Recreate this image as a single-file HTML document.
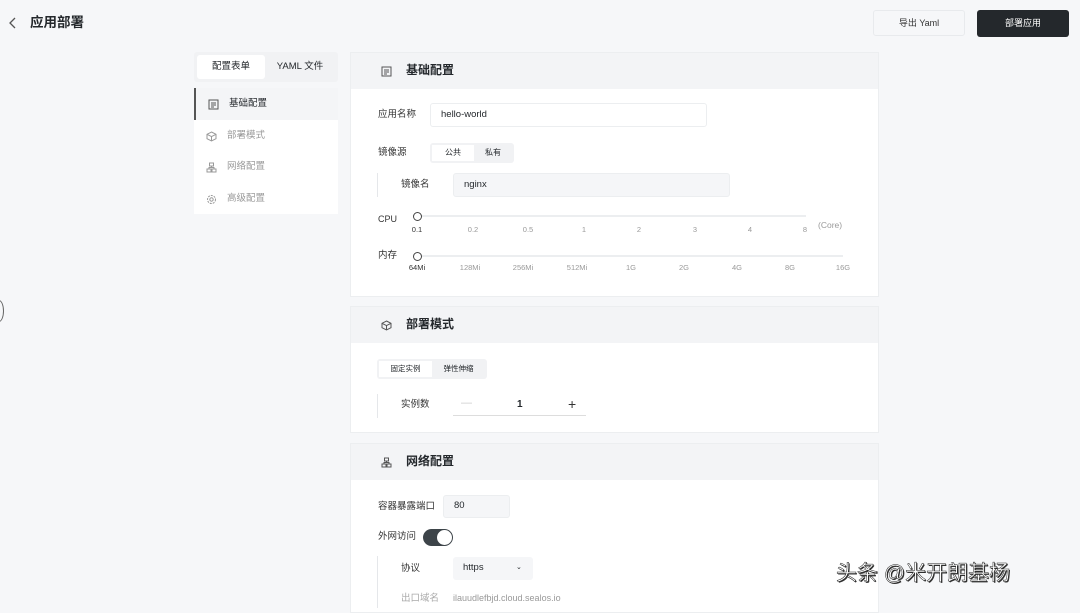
<!DOCTYPE html>
<html><head><meta charset="utf-8"><style>
*{box-sizing:border-box;margin:0;padding:0}
body{width:1080px;height:608px;overflow:hidden;background:#f6f7f9;font-family:"Liberation Sans","Noto Sans CJK SC",sans-serif;color:#24282c;position:relative;font-size:10px;line-height:1.15}
.a{position:absolute}
.card{position:absolute;left:350px;width:529px;background:#fff;border:1px solid #eceef0}
.hd{height:36px;background:#f3f4f6;display:flex;align-items:center;padding-left:30px;font-size:12px;font-weight:bold;color:#24282c}
.hd svg{margin-right:14px}
.lbl{position:absolute;font-size:9.5px;color:#333}
.inp{position:absolute;background:#f5f6f8;border:1px solid #eceef0;border-radius:3px;font-size:9.5px;padding-left:10px;display:flex;align-items:center}
.track{position:absolute;height:2px;background:#eceef0}
.knob{position:absolute;width:9px;height:9px;border:1.5px solid #444;border-radius:50%;background:#fff}
.tk{position:absolute;font-size:7.5px;color:#999;transform:translateX(-50%)}
.nav{position:absolute;left:194px;width:144px;height:32px;display:flex;align-items:center;padding-left:12px;font-size:9.5px;color:#999}
.nav svg{margin-right:10px}
</style></head><body>
<svg class="a" style="left:8px;top:17px" width="10" height="12" viewBox="0 0 10 12"><path d="M7 1L2 6l5 5" fill="none" stroke="#555" stroke-width="1.3"/></svg>
<div class="a" style="left:30px;top:15px;font-size:13.5px;font-weight:bold">应用部署</div>
<div class="a" style="left:873px;top:10px;width:92px;height:26px;border:1px solid #e8eaed;border-radius:3px;background:#f6f7f9;font-size:9px;display:flex;align-items:center;justify-content:center;color:#333">导出 Yaml</div>
<div class="a" style="left:977px;top:10px;width:92px;height:27px;border-radius:3px;background:#24282c;color:#fff;font-size:9px;display:flex;align-items:center;justify-content:center">部署应用</div>

<div class="a" style="left:194px;top:52px;width:144px;height:30px;background:#f1f2f4;border-radius:3px"></div>
<div class="a" style="left:197px;top:55px;width:68px;height:24px;background:#fff;border-radius:3px;font-size:9.5px;display:flex;align-items:center;justify-content:center">配置表单</div>
<div class="a" style="left:265px;top:55px;width:70px;height:24px;font-size:9.5px;display:flex;align-items:center;justify-content:center">YAML 文件</div>
<div class="a" style="left:194px;top:88px;width:144px;height:126px;background:#fff"></div>
<div class="nav" style="top:88px;background:#f4f5f7;border-left:2px solid #555;color:#24282c"><svg width="11" height="11" viewBox="0 0 11 11"><rect x="1" y="1" width="9" height="9" fill="none" stroke="#555"/><path d="M3 4h5M3 6h5M3 8h3" stroke="#555"/></svg>基础配置</div>
<div class="nav" style="top:120px"><svg width="11" height="11" viewBox="0 0 11 11"><path d="M5.5 1L10 3.3v4.4L5.5 10 1 7.7V3.3zM1 3.3l4.5 2.3L10 3.3M5.5 5.6V10" fill="none" stroke="#999"/></svg>部署模式</div>
<div class="nav" style="top:151px"><svg width="11" height="11" viewBox="0 0 11 11"><rect x="3.5" y="1" width="4" height="3" fill="none" stroke="#999"/><rect x="1" y="7" width="4" height="3" fill="none" stroke="#999"/><rect x="6" y="7" width="4" height="3" fill="none" stroke="#999"/><path d="M5.5 4v1.5M3 7V5.5h5V7" fill="none" stroke="#999"/></svg>网络配置</div>
<div class="nav" style="top:183px"><svg width="11" height="11" viewBox="0 0 11 11"><circle cx="5.5" cy="5.5" r="1.7" fill="none" stroke="#999"/><circle cx="5.5" cy="5.5" r="4" fill="none" stroke="#999" stroke-dasharray="2 1"/></svg>高级配置</div>

<div class="card" style="top:52px;height:245px">
<div class="hd"><svg width="11" height="11" viewBox="0 0 11 11"><rect x="1" y="1" width="9" height="9" fill="none" stroke="#555"/><path d="M3 4h5M3 6h5M3 8h3" stroke="#555"/></svg>基础配置</div>
</div>
<div class="lbl" style="left:378px;top:110px">应用名称</div>
<div class="inp" style="left:430px;top:103px;width:277px;height:24px;background:#fff">hello-world</div>
<div class="lbl" style="left:378px;top:148px">镜像源</div>
<div class="a" style="left:430px;top:143px;width:84px;height:20px;background:#f1f2f4;border-radius:3px"></div>
<div class="a" style="left:432px;top:145px;width:42px;height:16px;background:#fff;font-size:8px;display:flex;align-items:center;justify-content:center">公共</div>
<div class="a" style="left:474px;top:145px;width:38px;height:16px;font-size:8px;display:flex;align-items:center;justify-content:center">私有</div>
<div class="a" style="left:377px;top:173px;width:1px;height:24px;background:#e5e7ea"></div>
<div class="lbl" style="left:401px;top:180px">镜像名</div>
<div class="inp" style="left:453px;top:173px;width:277px;height:24px">nginx</div>
<div class="lbl" style="left:378px;top:214px;font-size:9px">CPU</div>
<div class="track" style="left:417px;top:215px;width:389px"></div>
<div class="knob" style="left:413px;top:212px"></div>
<div class="tk" style="left:417px;top:226px;color:#333">0.1</div><div class="tk" style="left:473px;top:226px">0.2</div><div class="tk" style="left:528px;top:226px">0.5</div><div class="tk" style="left:584px;top:226px">1</div><div class="tk" style="left:639px;top:226px">2</div><div class="tk" style="left:695px;top:226px">3</div><div class="tk" style="left:750px;top:226px">4</div><div class="tk" style="left:805px;top:226px">8</div>
<div class="a" style="left:818px;top:221px;font-size:8.5px;color:#999">(Core)</div>
<div class="lbl" style="left:378px;top:251px">内存</div>
<div class="track" style="left:417px;top:255px;width:426px"></div>
<div class="knob" style="left:413px;top:252px"></div>
<div class="tk" style="left:417px;top:264px;color:#333">64Mi</div><div class="tk" style="left:470px;top:264px">128Mi</div><div class="tk" style="left:523px;top:264px">256Mi</div><div class="tk" style="left:577px;top:264px">512Mi</div><div class="tk" style="left:631px;top:264px">1G</div><div class="tk" style="left:684px;top:264px">2G</div><div class="tk" style="left:737px;top:264px">4G</div><div class="tk" style="left:790px;top:264px">8G</div><div class="tk" style="left:843px;top:264px">16G</div>

<div class="card" style="top:306px;height:127px">
<div class="hd"><svg width="11" height="11" viewBox="0 0 11 11"><path d="M5.5 1L10 3.3v4.4L5.5 10 1 7.7V3.3zM1 3.3l4.5 2.3L10 3.3M5.5 5.6V10" fill="none" stroke="#555"/></svg>部署模式</div>
</div>
<div class="a" style="left:377px;top:359px;width:110px;height:20px;background:#f1f2f4;border-radius:3px"></div>
<div class="a" style="left:379px;top:361px;width:53px;height:16px;background:#fff;font-size:7.5px;display:flex;align-items:center;justify-content:center">固定实例</div>
<div class="a" style="left:432px;top:361px;width:53px;height:16px;font-size:7.5px;display:flex;align-items:center;justify-content:center">弹性伸缩</div>
<div class="a" style="left:377px;top:394px;width:1px;height:24px;background:#e5e7ea"></div>
<div class="lbl" style="left:401px;top:400px">实例数</div>
<div class="a" style="left:461px;top:397px;font-size:11px;color:#ccc">—</div>
<div class="a" style="left:517px;top:399px;font-size:10px;font-weight:bold">1</div>
<div class="a" style="left:568px;top:396px;font-size:14px;color:#333">+</div>
<div class="a" style="left:453px;top:415px;width:133px;height:1px;background:#ddd"></div>

<div class="card" style="top:443px;height:170px">
<div class="hd"><svg width="11" height="11" viewBox="0 0 11 11"><rect x="3.5" y="1" width="4" height="3" fill="none" stroke="#555"/><rect x="1" y="7" width="4" height="3" fill="none" stroke="#555"/><rect x="6" y="7" width="4" height="3" fill="none" stroke="#555"/><path d="M5.5 4v1.5M3 7V5.5h5V7" fill="none" stroke="#555"/></svg>网络配置</div>
</div>
<div class="lbl" style="left:378px;top:502px">容器暴露端口</div>
<div class="inp" style="left:443px;top:495px;width:67px;height:23px">80</div>
<div class="lbl" style="left:378px;top:532px">外网访问</div>
<div class="a" style="left:423px;top:529px;width:30px;height:17px;border-radius:9px;background:#3d4449"></div>
<div class="a" style="left:437px;top:530px;width:15px;height:15px;border-radius:50%;background:#fff"></div>
<div class="a" style="left:377px;top:556px;width:1px;height:52px;background:#e5e7ea"></div>
<div class="lbl" style="left:401px;top:564px">协议</div>
<div class="inp" style="left:453px;top:557px;width:80px;height:23px;border:none">https<span style="position:absolute;left:63px;font-size:7px">⌄</span></div>
<div class="lbl" style="left:401px;top:594px;color:#aaa">出口域名</div>
<div class="a" style="left:453px;top:593px;font-size:9px;color:#999">ilauudlefbjd.cloud.sealos.io</div>

<div class="a" style="left:-6px;top:300px;width:10px;height:22px;border:1.5px solid #666;border-radius:50%"></div>
<div class="a" style="left:836px;top:562px;font-size:21px;color:#fff;-webkit-text-stroke:0.5px #222;text-shadow:1px 1px 0 #333">头条 @米开朗基杨</div>
</body></html>
